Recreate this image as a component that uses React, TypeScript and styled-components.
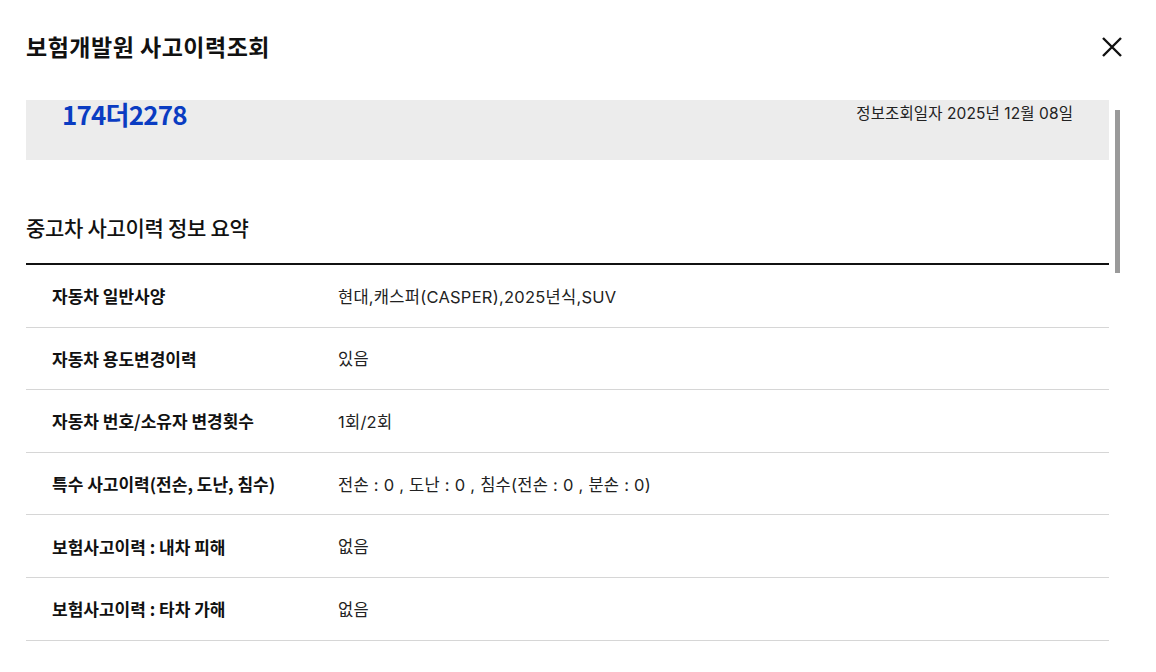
import { useLayoutEffect, useRef, useState } from "react";
import styled, { createGlobalStyle } from "styled-components";

const GlobalStyle = createGlobalStyle`
  html, body {
    margin: 0;
    padding: 0;
    background: #fff;
  }
  body {
    font-family: "Noto Sans CJK KR", "Noto Sans", sans-serif;
    color: #111;
  }
  * { box-sizing: border-box; }
`;

//#region style-component
const Modal = styled.div`
  width: 1156px;
  height: 672px;
  display: flex;
  flex-direction: column;
  background: #fff;
`;
const Header = styled.header`
  height: 100px;
  flex-shrink: 0;
  display: flex;
  justify-content: space-between;
  align-items: flex-start;
  padding: 30px 34px 0 26px;
`;
const Title = styled.h1`
  margin: 0;
  font-size: 23px;
  line-height: 32px;
  font-weight: 700;
  letter-spacing: 0.5px;
  color: #111;
`;
const CloseButton = styled.button`
  margin-top: 7px;
  width: 20px;
  height: 20px;
  padding: 0;
  border: 0;
  background: none;
  cursor: pointer;
  display: flex;
`;
const BodyWrap = styled.div`
  position: relative;
  flex: 1;
  min-height: 0;
  display: flex;
  padding-left: 26px;
`;
const Body = styled.div`
  width: 1094px;
  padding-right: 11px;
  overflow-y: auto;
  scrollbar-width: none;

  &::-webkit-scrollbar {
    display: none;
  }
`;
const ScrollThumb = styled.div`
  position: absolute;
  left: 1115px;
  width: 5px;
  background: #9a9a9a;
`;
const Content = styled.div`
  min-height: 2007px;
`;
const PlateBox = styled.div`
  height: 95px;
  padding: 31px 36px 0 36px;
  background: #ececec;
  display: flex;
  justify-content: space-between;
  align-items: flex-start;
`;
const Plate = styled.strong`
  font-size: 26px;
  line-height: 36px;
  font-weight: 700;
  color: #0a3cc2;
  letter-spacing: -0.8px;
`;
const QueryDate = styled.span`
  font-family: Inter, "Noto Sans CJK KR", sans-serif;
  font-size: 15.5px;
  line-height: 36px;
  color: #222;
  letter-spacing: 0.1px;
`;
const SectionTitle = styled.h2`
  margin: 52px 0 21px;
  font-size: 21px;
  line-height: 30px;
  font-weight: 500;
  color: #111;
  letter-spacing: -0.3px;
`;
const Table = styled.div`
  border-top: 2px solid #111;
`;
const Row = styled.div`
  height: 62.6px;
  display: flex;
  align-items: center;
  padding-left: 26px;
  border-bottom: 1px solid #d6d6d6;
`;
const Label = styled.div`
  width: 286px;
  flex-shrink: 0;
  font-size: 17px;
  font-weight: 700;
  color: #111;
  letter-spacing: 0;
`;
const Value = styled.div`
  font-family: Inter, "Noto Sans CJK KR", sans-serif;
  font-size: 16.5px;
  color: #222;
  letter-spacing: 0.25px;
`;
//#endregion

interface SummaryRow {
  label: string;
  value: string;
}

const summary: SummaryRow[] = [
  { label: "자동차 일반사양", value: "현대,캐스퍼(CASPER),2025년식,SUV" },
  { label: "자동차 용도변경이력", value: "있음" },
  { label: "자동차 번호/소유자 변경횟수", value: "1회/2회" },
  { label: "특수 사고이력(전손, 도난, 침수)", value: "전손 : 0 , 도난 : 0 , 침수(전손 : 0 , 분손 : 0)" },
  { label: "보험사고이력 : 내차 피해", value: "없음" },
  { label: "보험사고이력 : 타차 가해", value: "없음" },
];

const spec: SummaryRow[] = [
  { label: "제조사", value: "현대" },
  { label: "자동차명", value: "캐스퍼(CASPER)" },
  { label: "연식", value: "2025" },
  { label: "차체형상", value: "SUV" },
  { label: "용도 및 차종", value: "자가용 승용" },
  { label: "사용연료", value: "가솔린" },
];

function App() {
  const bodyRef = useRef<HTMLDivElement>(null);
  const [thumb, setThumb] = useState({ top: 0, height: 0 });

  const updateThumb = () => {
    const el = bodyRef.current;
    if (!el) return;
    const height = (el.clientHeight * el.clientHeight) / el.scrollHeight;
    const max = el.scrollHeight - el.clientHeight;
    const top = max > 0 ? (el.scrollTop / max) * (el.clientHeight - height) : 0;
    setThumb({ top, height });
  };

  useLayoutEffect(() => {
    if (bodyRef.current) bodyRef.current.scrollTop = 35;
    updateThumb();
  }, []);

  return (
    <Modal>
      <GlobalStyle />
      <Header>
        <Title>보험개발원 사고이력조회</Title>
        <CloseButton type="button" aria-label="닫기">
          <svg width="20" height="20" viewBox="0 0 20 20">
            <path d="M1 1 19 19M19 1 1 19" stroke="#111" strokeWidth="2.4" fill="none" />
          </svg>
        </CloseButton>
      </Header>

      <BodyWrap>
        <Body ref={bodyRef} onScroll={updateThumb}>
          <Content>
            <PlateBox>
              <Plate>174더2278</Plate>
              <QueryDate>정보조회일자 2025년 12월 08일</QueryDate>
            </PlateBox>

            <SectionTitle>중고차 사고이력 정보 요약</SectionTitle>
            <Table>
              {summary.map(row => (
                <Row key={row.label}>
                  <Label>{row.label}</Label>
                  <Value>{row.value}</Value>
                </Row>
              ))}
            </Table>

            <SectionTitle>자동차 일반사양 정보</SectionTitle>
            <Table>
              {spec.map(row => (
                <Row key={row.label}>
                  <Label>{row.label}</Label>
                  <Value>{row.value}</Value>
                </Row>
              ))}
            </Table>
          </Content>
        </Body>
        <ScrollThumb style={{ top: thumb.top, height: thumb.height }} />
      </BodyWrap>
    </Modal>
  );
}
export default App;
